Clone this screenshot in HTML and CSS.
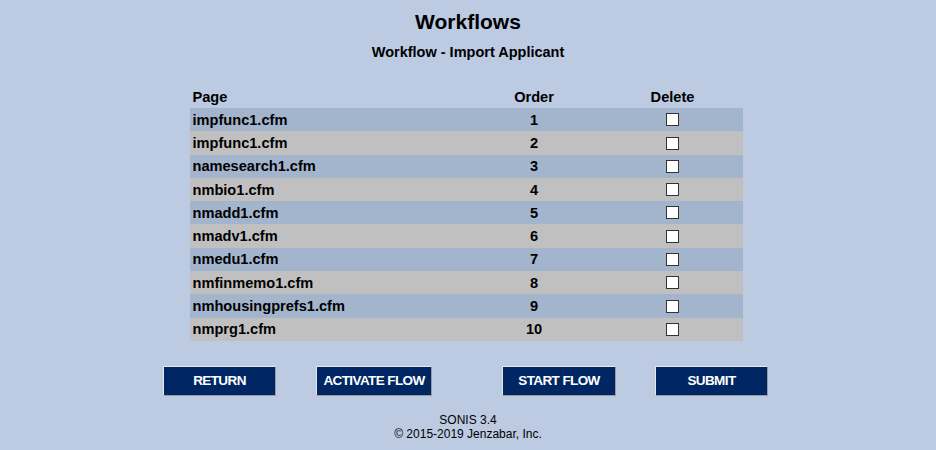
FILE: index.html
```html
<!DOCTYPE html>
<html>
<head>
<meta charset="utf-8">
<link rel="stylesheet" href="styles.css">
</head>
<body>
<div class="page">
  <h1 class="title">Workflows</h1>
  <h2 class="subtitle">Workflow - Import Applicant</h2>
  <table class="flow">
    <thead>
      <tr><th class="c-page">Page</th><th class="c-order">Order</th><th class="c-del">Delete</th></tr>
    </thead>
    <tbody>
      <tr class="odd"><td class="c-page">impfunc1.cfm</td><td class="c-order">1</td><td class="c-del"><span class="cb"></span></td></tr>
      <tr class="even"><td class="c-page">impfunc1.cfm</td><td class="c-order">2</td><td class="c-del"><span class="cb"></span></td></tr>
      <tr class="odd"><td class="c-page">namesearch1.cfm</td><td class="c-order">3</td><td class="c-del"><span class="cb"></span></td></tr>
      <tr class="even"><td class="c-page">nmbio1.cfm</td><td class="c-order">4</td><td class="c-del"><span class="cb"></span></td></tr>
      <tr class="odd"><td class="c-page">nmadd1.cfm</td><td class="c-order">5</td><td class="c-del"><span class="cb"></span></td></tr>
      <tr class="even"><td class="c-page">nmadv1.cfm</td><td class="c-order">6</td><td class="c-del"><span class="cb"></span></td></tr>
      <tr class="odd"><td class="c-page">nmedu1.cfm</td><td class="c-order">7</td><td class="c-del"><span class="cb"></span></td></tr>
      <tr class="even"><td class="c-page">nmfinmemo1.cfm</td><td class="c-order">8</td><td class="c-del"><span class="cb"></span></td></tr>
      <tr class="odd"><td class="c-page">nmhousingprefs1.cfm</td><td class="c-order">9</td><td class="c-del"><span class="cb"></span></td></tr>
      <tr class="even"><td class="c-page">nmprg1.cfm</td><td class="c-order">10</td><td class="c-del"><span class="cb"></span></td></tr>
    </tbody>
  </table>
  <div class="buttons">
    <button class="btn b-return">RETURN</button>
    <button class="btn b-activate">ACTIVATE FLOW</button>
    <button class="btn b-start">START FLOW</button>
    <button class="btn b-submit">SUBMIT</button>
  </div>
  <div class="footer">
    <div>SONIS 3.4</div>
    <div>© 2015-2019 Jenzabar, Inc.</div>
  </div>
</div>
</body>
</html>
```
FILE: styles.css
```css
html, body {
  margin: 0;
  padding: 0;
  background: #bccae2;
}
body {
  font-family: "Liberation Sans", Arial, sans-serif;
  color: #000;
  width: 936px;
  height: 450px;
  overflow: hidden;
}
.page {
  display: flex;
  flex-direction: column;
  align-items: center;
}
.title {
  margin: 10px 0 0 0;
  font-size: 21px;
  line-height: 24px;
  font-weight: bold;
}
.subtitle {
  margin: 10px 0 0 0;
  font-size: 14.5px;
  line-height: 17px;
  font-weight: bold;
}
.flow {
  margin: 24px 0 0 -4px;
  width: 553px;
  border-collapse: collapse;
  table-layout: fixed;
  font-size: 14.6px;
  font-weight: bold;
}
.flow th {
  height: 23px;
  padding: 0 3px;
  font-weight: bold;
  vertical-align: middle;
}
.flow td {
  height: 23.3px;
  padding: 0 3px;
  vertical-align: middle;
}
.c-page { width: 270px; text-align: left; }
.c-order { width: 131px; text-align: center; }
.c-del { text-align: center; }
.odd { background: #a3b4cd; }
.even { background: #c0c0c0; }
.cb {
  display: inline-block;
  width: 11px;
  height: 11px;
  background: #fff;
  border: 1px solid #333;
  vertical-align: middle;
  margin-top: -2px;
}
.buttons {
  display: flex;
  align-self: flex-start;
  margin: 25px 0 0 163px;
}
.btn {
  height: 30px;
  padding: 0;
  background: #002663;
  color: #fff;
  font-family: "Liberation Sans", Arial, sans-serif;
  font-size: 13.5px;
  font-weight: bold;
  letter-spacing: -0.6px;
  border: 1px solid;
  border-color: #e6e6e6 #9a9a9a #9a9a9a #e6e6e6;
}
.b-return { width: 113px; }
.b-activate { width: 116px; margin-left: 40px; }
.b-start { width: 114px; margin-left: 70px; }
.b-submit { width: 113px; margin-left: 39px; }
.footer {
  margin-top: 17px;
  font-size: 12px;
  line-height: 14px;
  text-align: center;
}
```
